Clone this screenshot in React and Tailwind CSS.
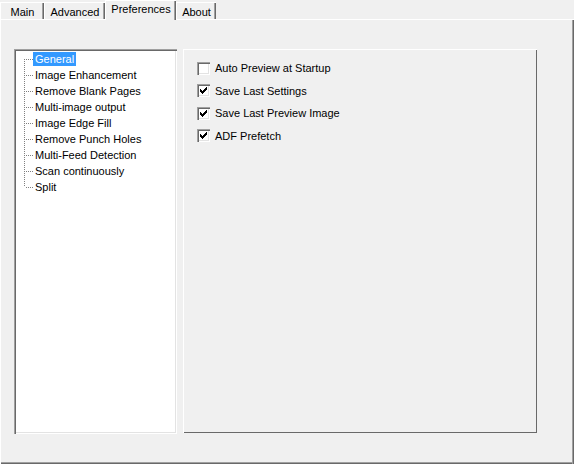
import React from 'react'

const font = { fontFamily: '"Liberation Sans", Arial, sans-serif' }

const tabs = [
  { label: 'Main', w: 'w-[44px]' },
  { label: 'Advanced', w: 'w-[61px]' },
  { label: 'Preferences', w: 'w-[71px]', active: true },
  { label: 'About', w: 'w-[40px]' },
]

const treeItems = [
  'General',
  'Image Enhancement',
  'Remove Blank Pages',
  'Multi-image output',
  'Image Edge Fill',
  'Remove Punch Holes',
  'Multi-Feed Detection',
  'Scan continuously',
  'Split',
]

const options = [
  { label: 'Auto Preview at Startup', checked: false },
  { label: 'Save Last Settings', checked: true },
  { label: 'Save Last Preview Image', checked: true },
  { label: 'ADF Prefetch', checked: true },
]

function Tab({ label, w, active }) {
  if (active) {
    return (
      <div
        className={`${w} h-[20px] -mb-px relative z-10 bg-[#f0f0f0] border-t border-l border-white shadow-[inset_-1px_0_#696969,inset_-2px_0_#a0a0a0] flex items-start justify-center pt-[1px] text-[11px] leading-[14px] text-black`}
      >
        {label}
      </div>
    )
  }
  return (
    <div
      className={`${w} h-[17px] bg-[#f0f0f0] border-t border-l border-white shadow-[inset_-1px_0_#696969,inset_-2px_0_#a0a0a0] flex items-start justify-center pt-[2px] text-[11px] leading-[14px] text-black`}
    >
      {label}
    </div>
  )
}

function TreeLines({ first, last }) {
  const y1 = first ? 8 : 0
  const y2 = last ? 8 : 16
  return (
    <svg width="9" height="16" viewBox="0 0 9 16" className="shrink-0" shapeRendering="crispEdges">
      <line x1="0.5" y1={y1} x2="0.5" y2={y2} stroke="#808080" strokeDasharray="1 1" />
      <line x1="1" y1="8.5" x2="9" y2="8.5" stroke="#808080" strokeDasharray="1 1" strokeDashoffset="1" />
    </svg>
  )
}

function CheckBox({ checked }) {
  return (
    <div className="w-[13px] h-[13px] shrink-0 bg-white shadow-[inset_1px_1px_#a0a0a0,inset_2px_2px_#696969,inset_-1px_-1px_#ffffff,inset_-2px_-2px_#e3e3e3]">
      {checked && (
        <svg width="13" height="13" viewBox="0 0 13 13" shapeRendering="crispEdges">
          <path
            d="M3 5h1v3h-1z M4 6h1v3h-1z M5 7h1v3h-1z M6 6h1v3h-1z M7 5h1v3h-1z M8 4h1v3h-1z M9 3h1v3h-1z"
            fill="#000"
          />
        </svg>
      )}
    </div>
  )
}

export default function App() {
  return (
    <div className="w-[574px] h-[464px] bg-[#f0f0f0] overflow-hidden select-none" style={font}>
      {/* tab strip */}
      <div className="h-[19px] flex items-end">
        {tabs.map((t) => (
          <Tab key={t.label} {...t} />
        ))}
      </div>

      {/* tab page */}
      <div className="h-[445px] border-t border-l border-white shadow-[inset_-1px_0_#696969,inset_-2px_0_#a0a0a0,inset_0_-1px_#696969,inset_0_-2px_#a0a0a0] pl-[13px] pt-[29px] flex gap-[6px]">
        {/* tree view */}
        <div className="w-[163px] h-[385px] bg-white p-[2px] shadow-[inset_1px_1px_#a0a0a0,inset_2px_2px_#696969,inset_-1px_-1px_#ffffff,inset_-2px_-2px_#e3e3e3]">
          <div className="pl-[8px] flex flex-col">
            {treeItems.map((item, i) => (
              <div key={item} className="h-[16px] flex items-center">
                <TreeLines first={i === 0} last={i === treeItems.length - 1} />
                <span
                  className={`h-[14px] px-[2px] text-[11px] leading-[14px] whitespace-nowrap ${
                    i === 0 ? 'bg-[#3399ff] text-white' : 'text-black'
                  }`}
                >
                  {item}
                </span>
              </div>
            ))}
          </div>
        </div>

        {/* options panel */}
        <div className="w-[354px] h-[384px] shadow-[inset_1px_1px_#ffffff,inset_-1px_-1px_#696969] pl-[14px] pt-[8px] flex flex-col">
          {options.map((o) => (
            <div key={o.label} className="h-[22.5px] flex items-center gap-[5px]">
              <CheckBox checked={o.checked} />
              <span className="text-[11px] leading-[14px] text-black whitespace-nowrap">{o.label}</span>
            </div>
          ))}
        </div>
      </div>
    </div>
  )
}
